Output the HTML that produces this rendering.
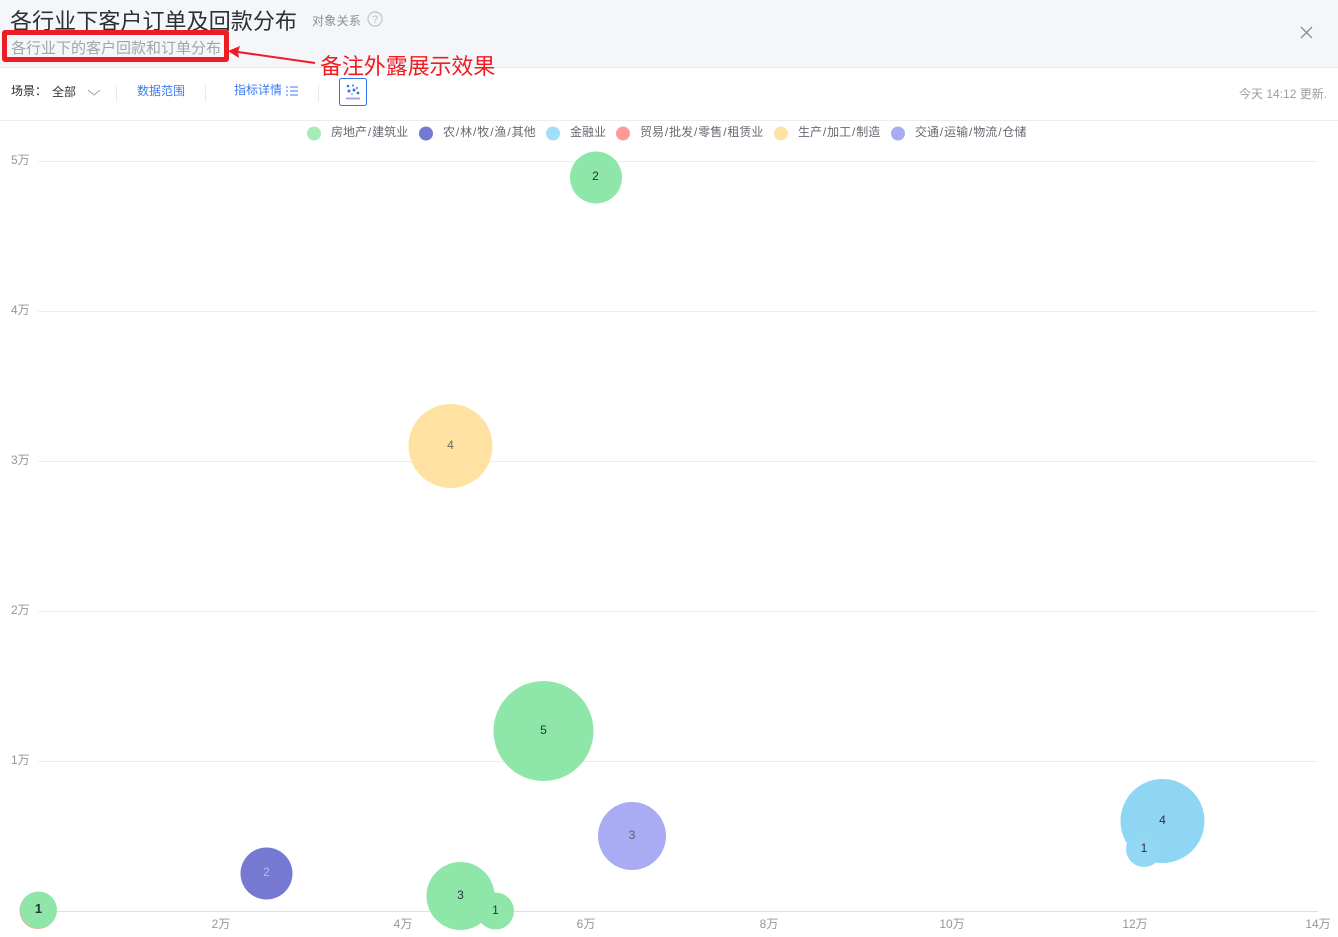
<!DOCTYPE html>
<html lang="zh"><head><meta charset="utf-8"><title>各行业下客户订单及回款分布</title>
<style>
html,body{margin:0;padding:0;background:#fff}
body{width:1338px;height:937px;position:relative;overflow:hidden;font-family:"Liberation Sans","Noto Sans CJK SC",sans-serif}
.t{position:absolute;white-space:nowrap;line-height:1}
.t i{font-style:normal;padding:0 .9px}
svg{position:absolute;left:0;top:0}
svg text{font-family:"Liberation Sans","Noto Sans CJK SC",sans-serif}
</style></head><body>
<div style="position:absolute;left:0;top:0;width:1338px;height:67px;background:#f4f6fa;border-bottom:1px solid #e8eaee"></div>
<div style="position:absolute;left:0;top:120px;width:1338px;height:1px;background:#ececee"></div>
<div class="t" style="left:10px;top:11px;font-size:22px;color:#2b2f36;letter-spacing:.08px">各行业下客户订单及回款分布</div>
<div class="t" style="left:312px;top:15px;font-size:12px;color:#8a8e96;letter-spacing:.3px">对象关系</div>
<div class="t" style="left:11px;top:41px;font-size:15px;color:#a3a5a8">各行业下的客户回款和订单分布</div>
<div style="position:absolute;left:2px;top:30px;width:217px;height:22px;border:5px solid #ee1c25;border-radius:3px"></div>
<div class="t" style="left:320px;top:56px;font-size:22px;color:#f01c22;letter-spacing:-.1px">备注外露展示效果</div>
<div class="t" style="left:11px;top:85px;font-size:12px;color:#262a30">场景：</div>
<div class="t" style="left:52px;top:86px;font-size:12px;color:#333">全部</div>
<div class="t" style="left:137px;top:85px;font-size:12px;color:#3d7bf0">数据范围</div>
<div class="t" style="left:234px;top:84px;font-size:12px;color:#3d7bf0">指标详情</div>
<div class="t" style="left:1239px;top:88px;font-size:12px;color:#9a9c9f">今天 14:12 更新.</div>
<div class="t" style="left:331px;top:126px;font-size:12px;color:#666a70">房地产<i>/</i>建筑业</div>
<div class="t" style="left:443px;top:126px;font-size:12px;color:#666a70">农<i>/</i>林<i>/</i>牧<i>/</i>渔<i>/</i>其他</div>
<div class="t" style="left:570px;top:126px;font-size:12px;color:#666a70">金融业</div>
<div class="t" style="left:640px;top:126px;font-size:12px;color:#666a70">贸易<i>/</i>批发<i>/</i>零售<i>/</i>租赁业</div>
<div class="t" style="left:798px;top:126px;font-size:12px;color:#666a70">生产<i>/</i>加工<i>/</i>制造</div>
<div class="t" style="left:915px;top:126px;font-size:12px;color:#666a70">交通<i>/</i>运输<i>/</i>物流<i>/</i>仓储</div>
<svg width="1338" height="937" viewBox="0 0 1338 937" fill="none">
<!-- header icons -->
<circle cx="375" cy="19" r="7" stroke="#c8cace" stroke-width="1.4"/>
<text x="375" y="23" font-size="11" fill="#bcbec2" text-anchor="middle">?</text>
<path d="M1301 27L1312 38M1312 27L1301 38" stroke="#8d9095" stroke-width="1.4"/>
<!-- arrow -->
<path d="M315 63L238 52" stroke="#ee1c25" stroke-width="2"/>
<path d="M228 51L240 46L238 52L239 58Z" fill="#ee1c25"/>
<!-- toolbar -->
<path d="M88 90L94 95L100 90" stroke="#a8abb0" stroke-width="1.1"/>
<path d="M116.500 85V102M205.500 85V102M318.500 85V102" stroke="#e8e9ec"/>
<path d="M290 87H298M290 91H298M290 95H298" stroke="#3d7bf0" stroke-width="1"/>
<path d="M286 87H288M286 91H288M286 95H288" stroke="#3d7bf0" stroke-width="1"/>
<rect x="339.500" y="78.500" width="27" height="27" rx="2" stroke="#2f74f0"/>
<g fill="#2f74f0"><circle cx="348" cy="86" r="1.300"/><circle cx="353" cy="85.500" r="1"/><circle cx="349" cy="91" r="1.500"/><circle cx="354" cy="90" r="1.500"/><circle cx="358" cy="93" r="1.400"/><circle cx="357" cy="88" r="1"/><circle cx="352" cy="94" r="0.800"/></g>
<rect x="346" y="97.500" width="14" height="2" fill="#a9a6f2"/>
<!-- legend -->
<circle cx="314" cy="133.500" r="7" fill="#a5edb8"/>
<circle cx="426" cy="133.500" r="7" fill="#7579d2"/>
<circle cx="553" cy="133.500" r="7" fill="#a2def8"/>
<circle cx="623" cy="133.500" r="7" fill="#ff9a9a"/>
<circle cx="781" cy="133.500" r="7" fill="#ffe2a2"/>
<circle cx="898" cy="133.500" r="7" fill="#a9acf3"/>
<!-- grid -->
<path d="M38 161.500H1318M38 311.500H1318M38 461.500H1318M38 611.500H1318M38 761.500H1318" stroke="#eeeeef"/>
<path d="M38 911.500H1318" stroke="#dfdfe2"/>
<g font-size="12" fill="#93969b">
<text x="11" y="164">5万</text><text x="11" y="314">4万</text><text x="11" y="464">3万</text><text x="11" y="614">2万</text><text x="11" y="764">1万</text>
<text x="221" y="928" text-anchor="middle">2万</text><text x="403" y="928" text-anchor="middle">4万</text><text x="586" y="928" text-anchor="middle">6万</text><text x="769" y="928" text-anchor="middle">8万</text><text x="952" y="928" text-anchor="middle">10万</text><text x="1135" y="928" text-anchor="middle">12万</text><text x="1318" y="928" text-anchor="middle">14万</text>
</g>
<!-- bubbles -->
<circle cx="38" cy="910.500" r="18.500" fill="#ff9a9a"/>
<circle cx="38.500" cy="910" r="18.500" fill="#8ee7a8"/>
<circle cx="596" cy="177.500" r="26" fill="#8ee7a8"/>
<circle cx="450.500" cy="446" r="42" fill="#ffe2a2"/>
<circle cx="543.500" cy="731" r="50" fill="#8ee7a8"/>
<circle cx="632" cy="836" r="34" fill="#a9acf3"/>
<circle cx="266.500" cy="873.500" r="26" fill="#7579d2"/>
<circle cx="495.500" cy="911" r="18.500" fill="#8ee7a8"/>
<circle cx="460.500" cy="896" r="34" fill="#8ee7a8"/>
<circle cx="1162.500" cy="821" r="42" fill="#8fd6f4"/>
<circle cx="1144" cy="849" r="18" fill="#92d8f5"/>
<g font-size="12" text-anchor="middle" fill="#2f3339">
<text x="38.500" y="913" font-weight="bold" font-size="13">1</text>
<text x="595.500" y="180">2</text>
<text x="450.500" y="449" fill="#6b6a60">4</text>
<text x="543.500" y="734">5</text>
<text x="632" y="839" fill="#5c5e78">3</text>
<text x="266.500" y="876" fill="#b6b8ea">2</text>
<text x="495.500" y="914">1</text>
<text x="460.500" y="899">3</text>
<text x="1162.500" y="824">4</text>
<text x="1144" y="852">1</text>
</g>
</svg>
</body></html>
